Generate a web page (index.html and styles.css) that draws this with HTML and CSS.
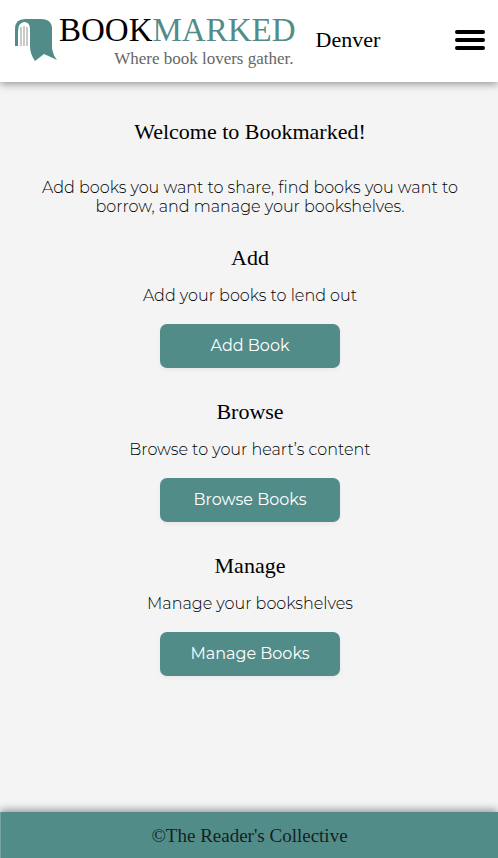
FILE: index.html
```html
<!DOCTYPE html>
<html lang="en">
<head>
<meta charset="utf-8">
<meta name="viewport" content="width=device-width, initial-scale=1">
<title>Bookmarked</title>
<link rel="stylesheet" href="styles.css">
</head>
<body>
<header class="site-header">
  <a class="brand" href="#">
    <svg class="brand-icon" viewBox="0 0 43 42" aria-hidden="true">
      <path fill="#518c89" d="M0 27V10Q0 0 10 0H26Q37 0 37 10V29Q38 36 42 41L29 35L20 42Q15 35 15 27V10Q15 3 9 3Q3 4 3 12V27Z"/>
      <path fill="none" stroke="#b9b9b9" stroke-width="1.500" d="M6 8V27M9 7V27M12 8V27"/>
    </svg>
    <span class="brand-text">
      <span class="brand-name">BOOK<span class="brand-accent">MARKED</span></span>
      <span class="brand-tagline">Where book lovers gather.</span>
    </span>
  </a>
  <span class="location">Denver</span>
  <button class="menu-button" type="button" aria-label="Menu">
    <span class="menu-bar"></span><span class="menu-bar"></span><span class="menu-bar"></span>
  </button>
</header>
<main class="content">
  <h1 class="heading">Welcome to Bookmarked!</h1>
  <p class="intro">Add books you want to share, find books you want to borrow, and manage your bookshelves.</p>
  <section class="action">
    <h2 class="heading">Add</h2>
    <p class="action-text">Add your books to lend out</p>
    <button class="action-button" type="button">Add Book</button>
  </section>
  <section class="action">
    <h2 class="heading">Browse</h2>
    <p class="action-text">Browse to your heart’s content</p>
    <button class="action-button" type="button">Browse Books</button>
  </section>
  <section class="action">
    <h2 class="heading">Manage</h2>
    <p class="action-text">Manage your bookshelves</p>
    <button class="action-button" type="button">Manage Books</button>
  </section>
</main>
<footer class="site-footer">©The Reader's Collective</footer>
</body>
</html>
```

FILE: styles.css
```css
* {
  box-sizing: border-box;
}

body {
  margin: 0;
  min-height: 100vh;
  display: flex;
  flex-direction: column;
  background: #f4f4f4;
  color: #000;
  font-family: Montserrat, Inter, sans-serif;
  font-size: 16px;
  font-weight: 300;
  line-height: 19px;
}

.site-header {
  display: flex;
  align-items: center;
  padding: 11px 13px 13px 15px;
  background: #fff;
  box-shadow: 0 2px 8px rgba(0, 0, 0, 0.4);
}

.brand {
  display: flex;
  gap: 1px;
  color: #000;
  text-decoration: none;
}

.brand,
.location,
.heading,
.site-footer {
  font-family: "Liberation Serif", serif;
  font-weight: 400;
}

.brand-icon {
  width: 43px;
  height: 42px;
  margin-top: 8px;
}

.brand-text {
  display: flex;
  flex-direction: column;
  align-items: flex-end;
}

.brand-name {
  font-size: 33px;
  line-height: 38px;
}

.brand-accent {
  color: #518c89;
}

.brand-tagline {
  padding-right: 2px;
  color: #666;
  font-size: 17px;
  line-height: 20px;
}

.location {
  margin-left: 20px;
  font-size: 22px;
  line-height: 24px;
}

.menu-button {
  display: flex;
  flex-direction: column;
  gap: 4px;
  margin-left: auto;
  padding: 0;
  border: 0;
  background: none;
}

.menu-bar {
  width: 30px;
  height: 4px;
  border-radius: 2px;
  background: #000;
}

.content {
  flex: 1;
  padding: 36px 32px 32px 34px;
  text-align: center;
}

.heading {
  margin: 0;
  font-size: 22px;
  line-height: 28px;
}

.intro {
  margin: 32px 0 28px;
}

.action {
  display: flex;
  flex-direction: column;
  align-items: center;
  margin-bottom: 30px;
}

.action-text {
  margin: 14px 0 19px;
}

.action-button {
  width: 180px;
  height: 44px;
  padding: 0 0 2px;
  border: 0;
  border-radius: 7px;
  background: #518c89;
  box-shadow: 0 2px 4px rgba(0, 0, 0, 0.05);
  color: #fff;
  font: inherit;
  font-weight: 400;
}

.site-footer {
  padding: 12px 0 10px;
  border-left: 1px solid #74a3a0;
  background: #518c89;
  box-shadow: 0 -2px 8px rgba(0, 0, 0, 0.4);
  color: #161f1e;
  font-size: 19px;
  line-height: 24px;
  text-align: center;
}
```
